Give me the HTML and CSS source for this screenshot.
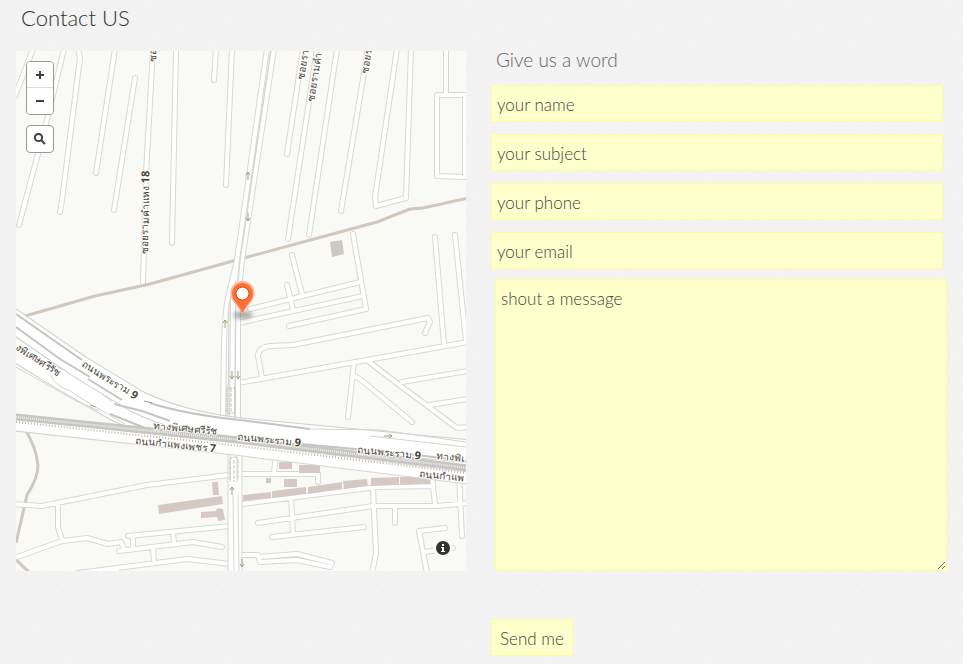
FILE: index.html
```html
<!DOCTYPE html>
<html lang="en">
<head>
<meta charset="utf-8">
<title>Contact US</title>
<link rel="stylesheet" href="styles.css">
</head>
<body>
<h1 class="page-title">Contact US</h1>
<main class="contact">
  <section class="map" aria-label="Map">
    <svg class="map-canvas" viewBox="16 51 450 520">
      <defs>
        <g id="streets">
          <path d="M33 49L15 96M64 49L47 120L19 225M78 49L80 58L62 200L60 212M115 49L96 173M135 78L114 210M153 49L146 173L143 282M176 49L172 243M216 49L214 80M232 49L226 185"/>
          <path d="M303 49L287 154M317 49L288 239M337 49L309 235M368 49L341 211M397 49L375 197L376 206L406 198L411 49M446 49V95M468 95H437V176L468 177M465 95V177"/>
          <path d="M353 234L366 309L289 326M292 255L302 294M287 285L293 309M250 309L360 282M238 323L363 296M425 333L430 322L428 318L293 345L270 346Q258 348 258 356L262 378M238 383L468 342M435 237L444 344M455 235L466 341"/>
          <path d="M354 363L348 417M354 376Q360 378 372 389L412 422M368 361L394 381L457 428L468 427M402 382L468 371M430 405L468 399"/>
          <path d="M14 504L42 506L147 485L229 475M58 503V527L62 540M17 557L62 541L87 538L108 544L121 542L124 549M119 551L193 542L222 547M128 536L230 526M133 537V548M173 533L174 543M153 548L154 562M78 573L187 559L230 564M117 568V575"/>
          <path d="M276 456L274 473M242 474H318V482M242 504L313 495L377 487L433 486M432 476L435 505M258 523L373 506H437L468 503M291 498L293 533M272 537L364 527M373 488L376 553L372 573M395 507V523M459 476L462 536M445 528L419 531L427 573M425 552L453 548M242 555H258L260 562L297 560L330 567L332 563L297 554L259 557"/>
        </g>
        <g id="avenues">
          <path d="M267 49L237 260L227 302Q224 324 224 345L223 420M274 49L242 260L238 300V424M237 260L233 300L232 424"/>
        </g>
        <path id="upper-band" d="M6 316L80 367L136 401Q180 423 245 430L340 439L476 452"/>
        <path id="lower-band" d="M6 344L58 376L108 405Q140 425 210 434L476 461"/>
        <path id="rail" d="M6 416L240 440L476 469"/>
      </defs>
      <rect class="land" x="16" y="51" width="450" height="520"/>
      <g class="waterway"><path d="M24 428Q36 446 38 465Q38 478 27 495L16 543M14 558L30 573"/></g>
      <use href="#streets" class="casing"/>
      <use href="#streets" class="surface"/>
      <g class="waterway"><path d="M25 316L95 296L150 284L240 259L377 222L410 209L423 208L468 198"/></g>
      <use href="#avenues" class="casing"/>
      <use href="#avenues" class="surface"/>
      <path class="hairline" d="M271 49L240 262L236 300L235 420M236 280L229 304L228 420"/>
      <g class="buildings">
        <path d="M330 242L342 240L344 254L332 257Z" class="shed"/>
        <path d="M212 482H218L219 495H213ZM158 505L222 496L223 504L159 514ZM201 512L216 511L217 508L223 509L225 520L218 521L217 517L201 518Z"/>
        <path d="M279 462H292V469H279ZM299 465H320V473H299ZM266 478H271V483H266ZM284 479H297V487H284Z"/>
        <path d="M243 495L271 492V498L243 501ZM272 491L306 487V494L272 498ZM308 487L342 482V489L308 494ZM343 481L367 479L368 486L344 489ZM371 478L399 477V485L371 486ZM400 477H430V484L400 485Z"/>
      </g>
      <path class="trunk-casing" d="M235 448V575"/>
      <path class="trunk" d="M235 448V575"/>
      <path class="hairline" d="M233 495L234 573M238 495L239 573M230 455V482M237 455V482M227 385V418M235 385V418"/>
      <path class="crossing" d="M230 480V461Q230 457 234 457Q238 457 238 461V480M234 460V482M227 412V388H235V412Q231 415 227 412M231 388V412"/>
      <use href="#lower-band" class="band-casing"/>
      <use href="#lower-band" class="band"/>
      <path class="hairline" d="M16 337L52 362Q58 370 72 371L100 392L112 402M16 367L76 401L100 411M50 374Q54 385 70 391L92 405L125 424"/>
      <use href="#upper-band" class="band-casing"/>
      <use href="#upper-band" class="band"/>
      <path class="shade" d="M16 314L82 360M16 327L60 359L90 377M88 379L122 400M150 403Q184 414 240 420L310 429M114 404L142 411L170 421M110 414L150 430M300 444L400 453L466 461"/>
      <path class="hairline" d="M310 429L380 430L466 442M370 436L466 447"/>
      <path class="frontage-casing" d="M6 424L235 449L476 479"/>
      <path class="frontage" d="M6 424L235 449L476 479"/>
      <use href="#rail" class="rail-bed"/>
      <use href="#rail" class="rail-ties"/>
      <path class="rail-dots" d="M16 422L240 446L466 473"/>
      <g class="arrows">
        <path d="M248 172V180M246 175L248 172L250 175M248 213V221M246 218L248 221L250 218M225 320V328M223 323L225 320L227 323M232 371V379M230 376L232 379L234 376M238 371V379M236 376L238 379L240 376M232 487V495M230 490L232 487L234 490M242 559V567M240 564L242 567L244 564M384 436H392M389 434L392 436L389 438M144 401L152 403M90 405L96 407"/>
      </g>
      <g class="labels">
        <text transform="translate(148 254) rotate(-89)">ซอยรามคำแหง <tspan class="num">18</tspan></text>
        <text transform="translate(156 62) rotate(-87)">ซอ</text>
        <text transform="translate(304 80) rotate(-81)">ซอยรา</text>
        <text transform="translate(314 102) rotate(-81)">ซอยรามคำ</text>
        <text transform="translate(368 74) rotate(-81)">ซอยร</text>
        <text transform="translate(81 366) rotate(32)">ถนนพระราม <tspan class="num">9</tspan></text>
        <text transform="translate(15 349) rotate(33)">งพิเศษศรีรัช</text>
        <text transform="translate(153 429) rotate(5)">ทางพิเศษศรีรัช</text>
        <text transform="translate(135 444) rotate(6)">ถนนกำแพงเพชร <tspan class="num">7</tspan></text>
        <text transform="translate(237 440) rotate(6)">ถนนพระราม <tspan class="num">9</tspan></text>
        <text transform="translate(357 453) rotate(6)">ถนนพระราม <tspan class="num">9</tspan></text>
        <text transform="translate(436 459) rotate(6)">ทางพิเ</text>
        <text transform="translate(419 477) rotate(6)">ถนนกำแพ</text>
      </g>
      <ellipse class="pin-shadow" cx="243" cy="315" rx="10" ry="4"/>
      <path class="pin-halo" d="M242.500 281A12 12 0 0 0 230.500 293.500C230.500 301 237 304 242.500 314C248 304 254.500 301 254.500 293.500A12 12 0 0 0 242.500 281Z"/>
      <path class="pin" d="M242.500 283A10.500 10.500 0 0 0 232 293.500C232 300 238 303 242.500 313C247 303 253 300 253 293.500A10.500 10.500 0 0 0 242.500 283Z"/>
      <circle class="pin-hole" cx="242.500" cy="293.500" r="6.500"/>
    </svg>
    <div class="zoom-bar">
      <button type="button" class="tool" aria-label="Zoom in"><svg class="glyph" viewBox="0 0 12 12"><path d="M6 2V10M2 6H10"/></svg></button>
      <button type="button" class="tool" aria-label="Zoom out"><svg class="glyph" viewBox="0 0 12 12"><path d="M2 6H10"/></svg></button>
    </div>
    <button type="button" class="tool search" aria-label="Search"><svg class="glyph lens" viewBox="0 0 12 12"><circle cx="4.500" cy="4.500" r="3.600"/><path d="M7 7L11 11"/></svg></button>
    <button type="button" class="info" aria-label="Map information"><svg viewBox="0 0 14 14"><circle cx="7" cy="7" r="7"/><path d="M6 3H8V5H6ZM5 6H8V10H9V11H5V10H6V7H5Z"/></svg></button>
  </section>
  <form class="message-form">
    <h2 class="form-title">Give us a word</h2>
    <div class="fields">
      <input class="field" type="text" placeholder="your name" aria-label="your name">
      <input class="field" type="text" placeholder="your subject" aria-label="your subject">
      <input class="field" type="tel" placeholder="your phone" aria-label="your phone">
      <input class="field" type="email" placeholder="your email" aria-label="your email">
    </div>
    <textarea class="field message" placeholder="shout a message" aria-label="shout a message"></textarea>
    <button class="send" type="submit">Send me</button>
  </form>
</main>
</body>
</html>
```
FILE: styles.css
```css
* { box-sizing: border-box; }

body {
  margin: 0;
  background-color: #f4f4f4;
  background-image: url("data:image/svg+xml,%3Csvg xmlns='http://www.w3.org/2000/svg' width='160' height='160'%3E%3Cfilter id='n'%3E%3CfeTurbulence type='fractalNoise' baseFrequency='.4' numOctaves='2' stitchTiles='stitch'/%3E%3CfeColorMatrix values='0 0 0 0 .5 0 0 0 0 .5 0 0 0 0 .5 .12 0 0 0 -.04'/%3E%3C/filter%3E%3Crect width='160' height='160' filter='url(%23n)'/%3E%3C/svg%3E");
  color: #444;
  font-family: Lato, "Open Sans", sans-serif;
  font-weight: 300;
}

.page-title {
  margin: 0;
  padding: 3px 21px 18px;
  color: #333;
  font-size: 22px;
  font-weight: 300;
  line-height: 30px;
}

.contact {
  display: grid;
  grid-template-columns: minmax(0, 450fr) minmax(0, 456fr);
  column-gap: 25px;
  align-items: start;
  padding: 0 16px 8px;
}

/* Map */
.map { position: relative; overflow: hidden; }
.map-canvas { display: block; width: 100%; }
.map-canvas path, .map-canvas use { fill: none; }
.land { fill: #f9faf6; }
.casing { stroke: #d8d8d5; stroke-width: 6px; stroke-linecap: round; stroke-linejoin: round; }
.surface { stroke: #fff; stroke-width: 4px; stroke-linecap: round; stroke-linejoin: round; }
.waterway { stroke: #d0c7bd; stroke-width: 3px; stroke-linejoin: round; }
.map-canvas .buildings path { fill: #d6c9c3; }
.map-canvas .buildings .shed { fill: #d0c7bd; }
.trunk-casing { stroke: #d5d5d2; stroke-width: 15px; }
.trunk { stroke: #fff; stroke-width: 13px; }
.band-casing { stroke: #cfcfcd; stroke-width: 24px; }
.band { stroke: #fff; stroke-width: 22px; }
.frontage-casing { stroke: #d5d5d2; stroke-width: 13px; }
.frontage { stroke: #fff; stroke-width: 11px; }
.hairline { stroke: #d5d5d2; stroke-width: 1px; }
.crossing { stroke: #c4c4c0; stroke-width: 1px; stroke-dasharray: 4 1; }
.shade { stroke: #c4c4c4; stroke-width: 2px; }
.rail-bed { stroke: #c6c6c4; stroke-width: 7px; }
.rail-ties { stroke: #f3eee4; stroke-width: 2px; stroke-dasharray: 1 1; }
.rail-dots { stroke: #bdb7aa; stroke-width: 2px; stroke-dasharray: 1 2; }
.arrows { stroke: #a49d7e; stroke-width: 1px; }
.labels {
  fill: #4a4336;
  stroke: #fff;
  stroke-width: 2px;
  stroke-linejoin: round;
  paint-order: stroke;
  font-family: "Noto Sans", sans-serif;
  font-size: 10px;
  font-weight: 400;
}
.num { font-size: 11px; font-weight: 700; }
.pin-shadow { fill: #777; opacity: .6; filter: blur(2px); }
.map-canvas .pin-halo { fill: #ffb394; }
.map-canvas .pin { fill: #ff7034; }
.pin-hole { fill: #fff; stroke: #c84a1d; stroke-width: 1px; }

.tool {
  display: grid;
  place-items: center;
  width: 26px;
  height: 26px;
  padding: 0;
  border: 0;
  background: #fff;
}
.glyph { width: 12px; height: 12px; fill: none; stroke: #404040; stroke-width: 2px; }
.zoom-bar {
  position: absolute;
  top: 10px;
  left: 10px;
  overflow: hidden;
  border: 1px solid #999;
  border-radius: 4px;
}
.zoom-bar .tool:first-child { border-bottom: 1px solid #ddd; }
.search {
  position: absolute;
  top: 74px;
  left: 10px;
  width: 28px;
  height: 28px;
  border: 1px solid #999;
  border-radius: 4px;
}
.info {
  position: absolute;
  right: 13px;
  bottom: 13px;
  display: grid;
  place-items: center;
  width: 20px;
  height: 20px;
  padding: 0;
  border: 0;
  border-radius: 50%;
  background: #f9faf6;
}
.info svg { width: 14px; height: 14px; fill: #333; }
.info path { fill: #fff; }

/* Form */
.form-title {
  margin: 0;
  padding: 0 5px 16px;
  color: #666;
  font-size: 19px;
  font-weight: 300;
  line-height: 18px;
}
.fields { display: grid; gap: 12px; margin-right: 4px; }
.field, .send {
  border: 1px solid #ffff99;
  border-radius: 0;
  background: #ffffcc;
  color: #444;
  font: inherit;
  font-size: 17px;
  line-height: 24px;
}
.field {
  display: block;
  width: 100%;
  height: 37px;
  padding: 4px 5px 2px;
}
.field::placeholder { color: #444; opacity: 1; }
.message {
  width: calc(100% - 4px);
  height: 292px;
  margin: 10px 0 48px 4px;
  padding-top: 7px;
  resize: both;
}
.send { height: 37px; padding: 2px 8px 0; }
```
